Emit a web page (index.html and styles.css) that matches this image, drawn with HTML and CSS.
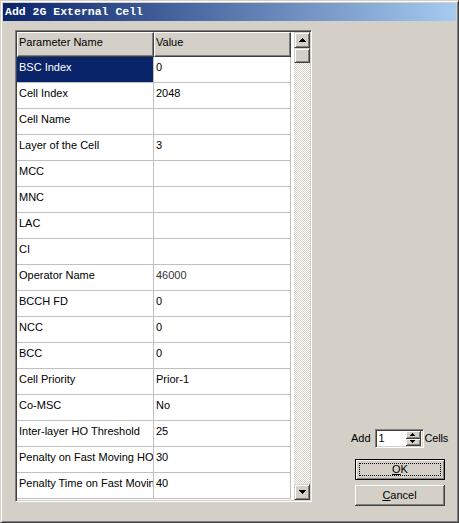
FILE: index.html
```html
<!DOCTYPE html>
<html>
<head>
<meta charset="utf-8">
<link rel="stylesheet" href="styles.css">
</head>
<body>
<div class="window">
  <div class="titlebar"><span class="title">Add 2G External Cell</span></div>
  <div class="content">
    <div class="frame">
      <div class="grid">
        <div class="head"><div class="hcell c1">Parameter Name</div><div class="hcell c2">Value</div></div>
        <div class="row"><div class="cell c1 sel">BSC Index</div><div class="cell c2">0</div></div>
        <div class="row"><div class="cell c1">Cell Index</div><div class="cell c2">2048</div></div>
        <div class="row"><div class="cell c1">Cell Name</div><div class="cell c2"></div></div>
        <div class="row"><div class="cell c1">Layer of the Cell</div><div class="cell c2">3</div></div>
        <div class="row"><div class="cell c1">MCC</div><div class="cell c2"></div></div>
        <div class="row"><div class="cell c1">MNC</div><div class="cell c2"></div></div>
        <div class="row"><div class="cell c1">LAC</div><div class="cell c2"></div></div>
        <div class="row"><div class="cell c1">CI</div><div class="cell c2"></div></div>
        <div class="row"><div class="cell c1">Operator Name</div><div class="cell c2 dim">46000</div></div>
        <div class="row"><div class="cell c1">BCCH FD</div><div class="cell c2">0</div></div>
        <div class="row"><div class="cell c1">NCC</div><div class="cell c2">0</div></div>
        <div class="row"><div class="cell c1">BCC</div><div class="cell c2">0</div></div>
        <div class="row"><div class="cell c1">Cell Priority</div><div class="cell c2">Prior-1</div></div>
        <div class="row"><div class="cell c1">Co-MSC</div><div class="cell c2">No</div></div>
        <div class="row"><div class="cell c1">Inter-layer HO Threshold</div><div class="cell c2">25</div></div>
        <div class="row"><div class="cell c1">Penalty on Fast Moving HO</div><div class="cell c2">30</div></div>
        <div class="row"><div class="cell c1">Penalty Time on Fast Moving</div><div class="cell c2">40</div></div>
      </div>
      <div class="gap"></div>
      <div class="scrollbar">
        <div class="sbtn"><svg width="7" height="4" viewBox="0 0 7 4"><path d="M3 0h1v1h1v1h1v1h1v1H0V3h1V2h1V1h1z" fill="#000"/></svg></div>
        <div class="thumb"></div>
        <div class="track"></div>
        <div class="sbtn"><svg width="7" height="4" viewBox="0 0 7 4"><path d="M0 0h7v1H6v1H5v1H4v1H3V3H2V2H1V1H0z" fill="#000"/></svg></div>
      </div>
    </div>
    <div class="side">
      <div class="addrow">
        <span class="lbl">Add</span>
        <div class="spin">
          <span class="val">1</span>
          <div class="spinbtns">
            <div class="spb"><svg width="5" height="3" viewBox="0 0 5 3"><path d="M2 0h1v1h1v1h1v1H0V2h1V1h1z" fill="#000"/></svg></div>
            <div class="spb"><svg width="5" height="3" viewBox="0 0 5 3"><path d="M0 0h5v1H4v1H3v1H2V2H1V1H0z" fill="#000"/></svg></div>
          </div>
        </div>
        <span class="lbl cells">Cells</span>
      </div>
      <div class="btn default"><span class="focus"><u>O</u>K</span></div>
      <div class="btn"><span class="nofocus"><u>C</u>ancel</span></div>
    </div>
  </div>
</div>
</body>
</html>
```

FILE: styles.css
```css
* { box-sizing: border-box; }
html, body { margin: 0; padding: 0; background: #d4d0c8; }
body {
  width: 459px;
  height: 523px;
  overflow: hidden;
  font-family: "Liberation Sans", Arial, sans-serif;
  font-size: 11px;
  color: #000;
}
.window {
  width: 459px;
  height: 523px;
  background: #d4d0c8;
  border-top: 1px solid #d4d0c8;
  border-left: 1px solid #d4d0c8;
  border-right: 1px solid #404040;
  border-bottom: 1px solid #404040;
  box-shadow: inset 1px 1px 0 #fff, inset -1px -1px 0 #808080;
  padding: 2px;
  display: flex;
  flex-direction: column;
}
.titlebar {
  height: 18px;
  background: linear-gradient(to right, #0a246a, #a6caf0);
  display: flex;
  align-items: center;
  padding-left: 2px;
}
.title {
  font-family: "Liberation Mono", "Courier New", monospace;
  font-weight: bold;
  font-size: 11.5px;
  color: #fff;
  line-height: 14px;
}
.content {
  display: flex;
  padding: 9px 0 0 12px;
}
.frame {
  width: 297px;
  height: 472px;
  border-top: 1px solid #808080;
  border-left: 1px solid #808080;
  border-right: 1px solid #fff;
  border-bottom: 1px solid #fff;
  box-shadow: inset 1px 1px 0 #404040, inset -1px -1px 0 #d4d0c8;
  padding: 1px;
  display: flex;
  background: #fff;
}
.grid {
  width: 274px;
  height: 468px;
  overflow: hidden;
  background: #fff;
}
.head {
  display: flex;
  height: 25px;
}
.hcell {
  width: 137px;
  height: 25px;
  background: #d4d0c8;
  border-top: 1px solid #fff;
  border-left: 1px solid #fff;
  border-right: 1px solid #404040;
  border-bottom: 1px solid #404040;
  box-shadow: inset -1px -1px 0 #808080;
  padding: 3px 0 0 1px;
  line-height: 13px;
  white-space: nowrap;
  overflow: hidden;
}
.row {
  display: flex;
  height: 26px;
  border-bottom: 1px solid #c0c0c0;
}
.cell {
  width: 137px;
  height: 25px;
  border-right: 1px solid #c0c0c0;
  padding: 4px 0 0 2px;
  line-height: 13px;
  white-space: nowrap;
  overflow: hidden;
}
.cell.sel {
  background: #0a246a;
  color: #fff;
}
.cell.dim { color: #333; }
.gap {
  width: 3px;
  height: 468px;
  background: #fff;
}
.scrollbar {
  width: 16px;
  height: 468px;
  display: flex;
  flex-direction: column;
}
.sbtn, .thumb {
  width: 16px;
  height: 16px;
  background: #d4d0c8;
  border-top: 1px solid #d4d0c8;
  border-left: 1px solid #d4d0c8;
  border-right: 1px solid #404040;
  border-bottom: 1px solid #404040;
  box-shadow: inset 1px 1px 0 #fff, inset -1px -1px 0 #808080;
  display: flex;
  align-items: center;
  justify-content: center;
}
.thumb { height: 15px; }
.track {
  flex: 1;
  background: repeating-conic-gradient(#d4d0c8 0 25%, #fff 0 50%) 0 0 / 2px 2px;
}
.side {
  padding-top: 399px;
  display: flex;
  flex-direction: column;
}
.addrow {
  display: flex;
  align-items: center;
  height: 19px;
  margin-left: 39px;
}
.lbl { line-height: 13px; }
.cells { margin-left: 1px; letter-spacing: -0.2px; }
.spin {
  margin-left: 4px;
  width: 49px;
  height: 19px;
  background: #fff;
  border-top: 1px solid #808080;
  border-left: 1px solid #808080;
  border-right: 1px solid #fff;
  border-bottom: 1px solid #fff;
  box-shadow: inset 1px 1px 0 #404040, inset -1px -1px 0 #d4d0c8;
  padding: 2px;
  display: flex;
  align-items: center;
}
.val { flex: 1; padding-left: 1px; line-height: 13px; }
.spinbtns {
  width: 15px;
  height: 15px;
  display: flex;
  flex-direction: column;
}
.spb {
  flex: 1;
  background: #d4d0c8;
  border-right: 1px solid #404040;
  border-bottom: 1px solid #404040;
  box-shadow: inset 1px 1px 0 #fff, inset -1px -1px 0 #808080;
  display: flex;
  align-items: center;
  justify-content: center;
}
.btn {
  margin-left: 43px;
  width: 90px;
  height: 21px;
  background: #d4d0c8;
  border-right: 1px solid #404040;
  border-bottom: 1px solid #404040;
  box-shadow: inset 1px 1px 0 #fff, inset -1px -1px 0 #808080;
  display: flex;
  align-items: center;
  justify-content: center;
  padding: 3px;
  margin-top: 5px;
}
.btn.default {
  margin-top: 11px;
  border: 1px solid #000;
  box-shadow: inset 1px 1px 0 #fff, inset -1px -1px 0 #808080;
}
.focus, .nofocus {
  flex: 1;
  align-self: stretch;
  display: flex;
  align-items: center;
  justify-content: center;
  line-height: 13px;
}
.focus { border: 1px dotted #000; }
u { text-decoration: underline; text-underline-offset: 1px; }
```
